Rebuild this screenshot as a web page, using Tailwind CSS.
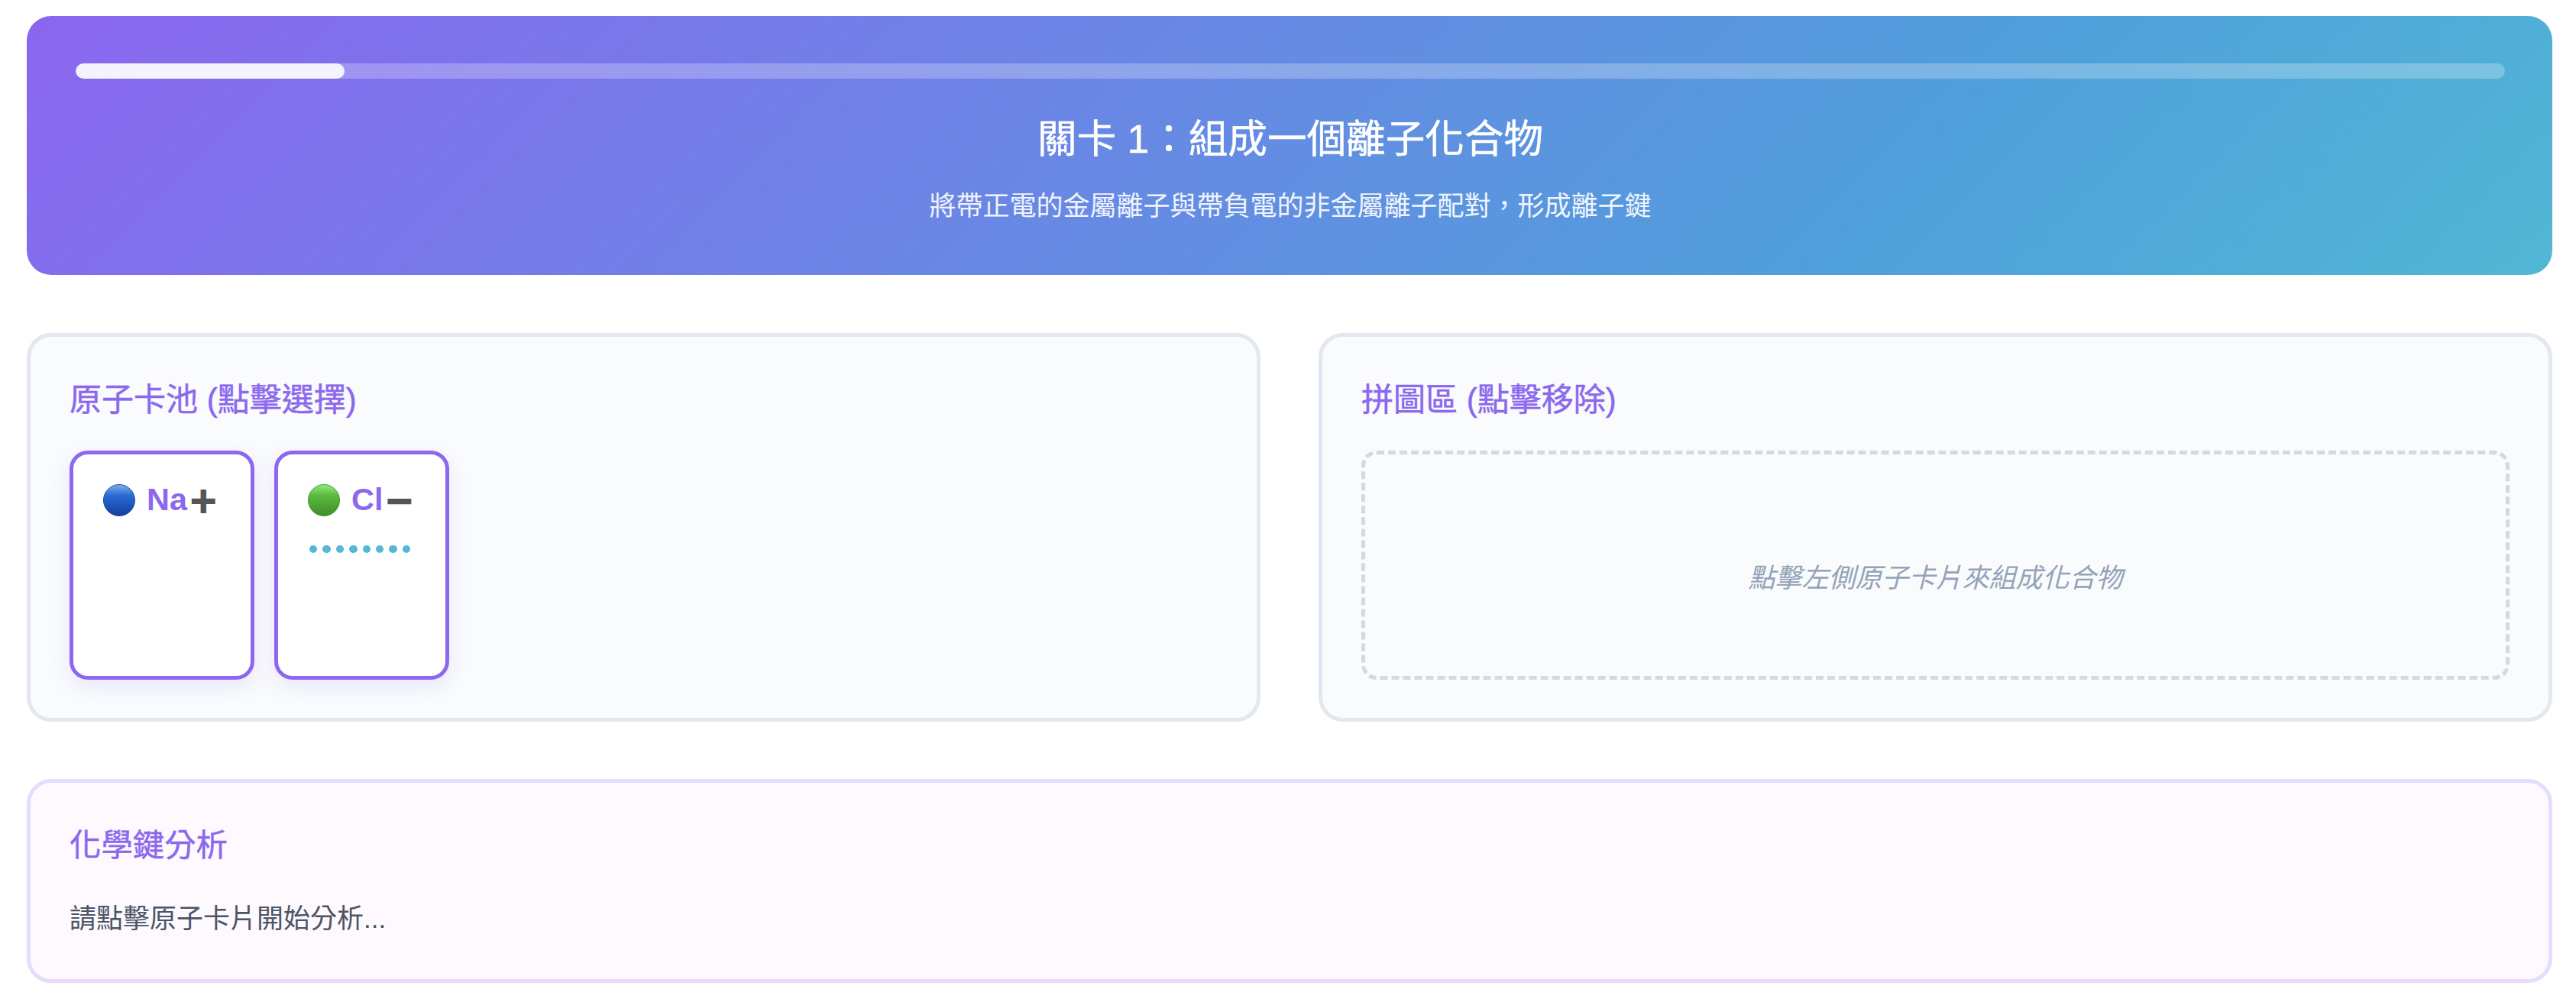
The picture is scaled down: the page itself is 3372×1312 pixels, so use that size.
<!DOCTYPE html>
<html lang="zh-Hant">
<head>
  <meta charset="UTF-8" />
  <title>離子化合物拼圖</title>
  <script src="https://cdn.jsdelivr.net/npm/@tailwindcss/browser@4"></script>
</head>
<body class="bg-white h-[1312px] overflow-hidden pl-[35px] pr-[31px] pt-[21px] font-['Liberation_Sans','Noto_Sans_CJK_TC',sans-serif]">

  <!-- level header -->
  <header class="h-[339px] rounded-[32px] bg-[linear-gradient(135deg,#8b66f0,#4fa0db_74%,#52b7d4)] pl-[64px] pr-[62px] pt-[62px] text-center text-white">
    <div class="h-[20px] rounded-[10px] bg-white/25 overflow-hidden">
      <div class="h-full w-[352px] rounded-[10px] bg-[#f5f3fe]"></div>
    </div>
    <h1 class="mt-[46px] text-[51.6px] leading-[66px] font-normal [-webkit-text-stroke:0.5px_#ffffff]">關卡 1：組成一個離子化合物</h1>
    <p class="mt-[31px] text-[35px] leading-[48px] text-white/90">將帶正電的金屬離子與帶負電的非金屬離子配對，形成離子鍵</p>
  </header>

  <main class="mt-[76px] grid grid-cols-2 gap-[76px]">
    <!-- atom pool -->
    <section class="h-[509px] rounded-[32px] border-[5px] border-[#e2e8f0] bg-[#f9fbfd] px-[51px] pt-[53px]">
      <h2 class="text-[42px] leading-[60px] font-normal text-[#8b68ee] [-webkit-text-stroke:0.5px_#8b68ee]">原子卡池 (點擊選擇)</h2>
      <div class="mt-[36px] flex gap-[26px]">
        <div class="w-[242px] h-[300px] rounded-[24px] border-[5px] border-[#8b68ee] bg-white pl-[39px] pt-[39px] shadow-[0_9px_26px_rgba(139,104,238,0.14)]">
          <div class="flex items-center h-[42px]">
            <svg class="w-[42px] h-[42px] shrink-0" viewBox="0 0 42 42">
              <defs>
                <linearGradient id="blue" x1="0" y1="0" x2="0" y2="1">
                  <stop offset="0" stop-color="#7fb0ee" />
                  <stop offset="0.35" stop-color="#2a6ad0" />
                  <stop offset="1" stop-color="#123f9f" />
                </linearGradient>
              </defs>
              <circle cx="21" cy="21" r="20.5" fill="url(#blue)" stroke="#1c4f9e" stroke-width="1" />
            </svg>
            <span class="ml-[15px] text-[41.4px] leading-none font-bold text-[#8b68ee]">Na</span>
            <span class="ml-[2px] font-['DejaVu_Sans',sans-serif] text-[46px] leading-none font-bold text-[#555555] [-webkit-text-stroke:2px_#555555]">+</span>
          </div>
        </div>
        <div class="w-[229px] h-[300px] rounded-[24px] border-[5px] border-[#8b68ee] bg-white pl-[39px] pt-[39px] shadow-[0_9px_26px_rgba(139,104,238,0.14)]">
          <div class="flex items-center h-[42px]">
            <svg class="w-[42px] h-[42px] shrink-0" viewBox="0 0 42 42">
              <defs>
                <linearGradient id="green" x1="0" y1="0" x2="0" y2="1">
                  <stop offset="0" stop-color="#8fee78" />
                  <stop offset="0.35" stop-color="#5cb83f" />
                  <stop offset="1" stop-color="#3f8f26" />
                </linearGradient>
              </defs>
              <circle cx="21" cy="21" r="20.5" fill="url(#green)" stroke="#4a9a35" stroke-width="1" />
            </svg>
            <span class="ml-[15px] text-[41.4px] leading-none font-bold text-[#8b68ee]">Cl</span>
            <span class="ml-[2px] font-['DejaVu_Sans',sans-serif] text-[46px] leading-none font-bold text-[#555555] [-webkit-text-stroke:2px_#555555]">−</span>
          </div>
          <div class="mt-[38px] ml-[2px] flex gap-[7px]">
            <span class="w-[10.4px] h-[10.4px] rounded-full bg-[#54b8d6]"></span>
            <span class="w-[10.4px] h-[10.4px] rounded-full bg-[#54b8d6]"></span>
            <span class="w-[10.4px] h-[10.4px] rounded-full bg-[#54b8d6]"></span>
            <span class="w-[10.4px] h-[10.4px] rounded-full bg-[#54b8d6]"></span>
            <span class="w-[10.4px] h-[10.4px] rounded-full bg-[#54b8d6]"></span>
            <span class="w-[10.4px] h-[10.4px] rounded-full bg-[#54b8d6]"></span>
            <span class="w-[10.4px] h-[10.4px] rounded-full bg-[#54b8d6]"></span>
            <span class="w-[10.4px] h-[10.4px] rounded-full bg-[#54b8d6]"></span>
          </div>
        </div>
      </div>
    </section>

    <!-- puzzle area -->
    <section class="h-[509px] rounded-[32px] border-[5px] border-[#e2e8f0] bg-[#f9fbfd] px-[51px] pt-[53px]">
      <h2 class="text-[42px] leading-[60px] font-normal text-[#8b68ee] [-webkit-text-stroke:0.5px_#8b68ee]">拼圖區 (點擊移除)</h2>
      <div class="mt-[36px] h-[300px] rounded-[20px] border-[5px] border-dashed border-[#d1dae2] flex items-center justify-center pt-[34px]">
        <p class="text-[35px] italic text-[#94a3b8]">點擊左側原子卡片來組成化合物</p>
      </div>
    </section>
  </main>

  <!-- analysis -->
  <section class="mt-[75px] h-[267px] rounded-[32px] border-[5px] border-[#e7dcfb] bg-[#fdf9ff] px-[51px] pt-[52px]">
    <h2 class="text-[41.4px] leading-[60px] font-normal text-[#8b68ee] [-webkit-text-stroke:0.5px_#8b68ee]">化學鍵分析</h2>
    <p class="mt-[41px] text-[35px] leading-[50px] text-[#4b5563]">請點擊原子卡片開始分析...</p>
  </section>

</body>
</html>
